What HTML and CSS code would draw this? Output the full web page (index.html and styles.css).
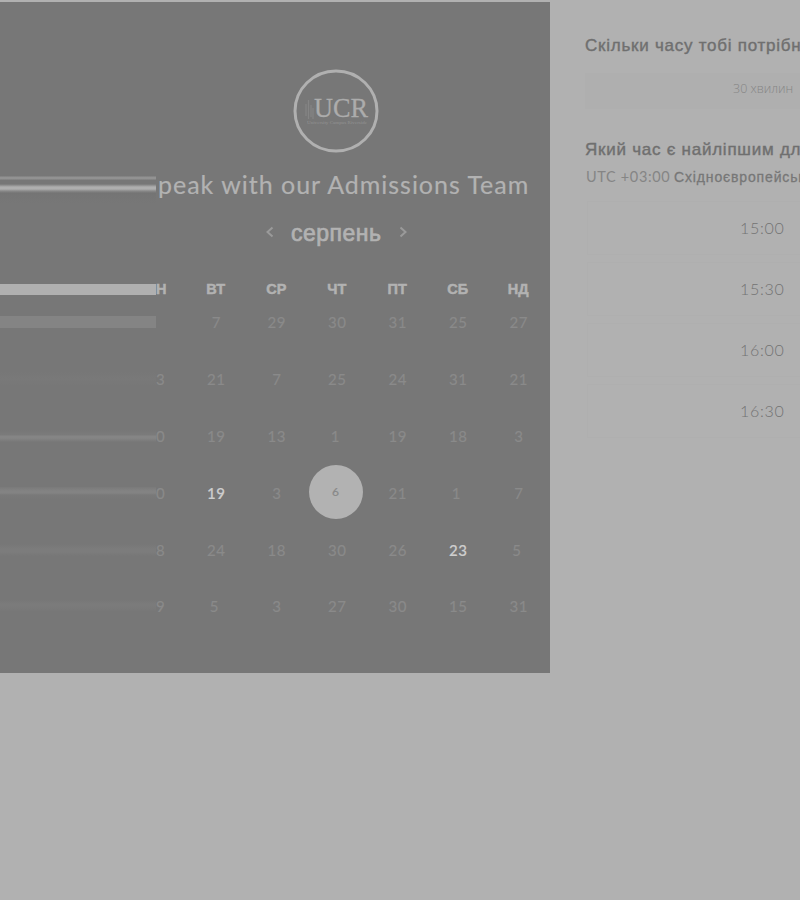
FILE: index.html
```html
<!DOCTYPE html>
<html lang="uk">
<head>
<meta charset="utf-8">
<title>Speak with our Admissions Team</title>
<link rel="stylesheet" href="styles.css">
</head>
<body>
<main class="scheduler">
  <section class="calendar">
    <div class="logo">
      <svg width="86" height="84" viewBox="0 0 86 84">
        <ellipse cx="43" cy="42" rx="41" ry="40" fill="none" stroke="#b0b0b0" stroke-width="3"/>
        <path d="M13 47V35M15.500 50V31M18 48V36M20 50V39" stroke="#858585" stroke-width="1.200"/>
        <text class="logo-name" x="21" y="48" textLength="54" lengthAdjust="spacingAndGlyphs">UCR</text>
        <text class="logo-sub" x="14" y="55" textLength="60" lengthAdjust="spacingAndGlyphs">University Campus Riverside</text>
      </svg>
    </div>
    <div class="heading">
      <div class="streak streak-title"></div>
      <h1>peak with our Admissions Team</h1>
    </div>
    <div class="month">
      <svg width="8" height="12" viewBox="0 0 8 12"><path d="M6.500 1.500L1.500 6l5 4.500"/></svg>
      <span>серпень</span>
      <svg width="8" height="12" viewBox="0 0 8 12"><path d="M1.500 1.500L6.500 6l-5 4.500"/></svg>
    </div>
    <div class="row weekdays"><i class="streak streak-days"></i><b class="cut">Н</b><b>ВТ</b><b>СР</b><b>ЧТ</b><b>ПТ</b><b>СБ</b><b>НД</b></div>
    <div class="row first"><i class="streak streak-one"></i><span class="cut"></span><span>7</span><span>29</span><span>30</span><span>31</span><span>25</span><span>27</span></div>
    <div class="row"><i class="streak streak-two"></i><span class="cut">3</span><span>21</span><span>7</span><span>25</span><span>24</span><span>31</span><span>21</span></div>
    <div class="row"><i class="streak streak-three"></i><span class="cut">0</span><span>19</span><span>13</span><span class="left">1</span><span>19</span><span>18</span><span>3</span></div>
    <div class="row"><i class="streak streak-four"></i><span class="cut">0</span><span class="open">19</span><span>3</span><span><em>6</em></span><span>21</span><span class="left">1</span><span>7</span></div>
    <div class="row"><i class="streak streak-five"></i><span class="cut">8</span><span>24</span><span>18</span><span>30</span><span>26</span><span class="open">23</span><span class="left">5</span></div>
    <div class="row"><i class="streak streak-six"></i><span class="cut">9</span><span class="left">5</span><span>3</span><span>27</span><span>30</span><span>15</span><span>31</span></div>
  </section>
  <section class="times">
    <h2 class="q-one">Скільки часу тобі потрібно?</h2>
    <div class="duration">30 хвилин</div>
    <h2 class="q-two">Який час є найліпшим для тебе?</h2>
    <p class="zone"><span>UTC +03:00</span> <b>Східноєвропейський час</b></p>
    <div class="slots">
      <div class="slot">15:00</div>
      <div class="slot">15:30</div>
      <div class="slot">16:00</div>
      <div class="slot">16:30</div>
    </div>
  </section>
</main>
</body>
</html>
```
FILE: styles.css
```css
* { box-sizing: border-box; }
body { margin: 0; width: 800px; height: 900px; overflow: hidden; background: #b1b1b1; font-family: Lato, "Liberation Sans", sans-serif; }
.scheduler { display: flex; width: 800px; overflow: hidden; padding-top: 2px; }
.calendar { flex: none; width: 550px; height: 671px; padding-top: 67px; background: #777; color: #b2b2b2; }
.logo { height: 84px; padding-left: 293px; }
.logo svg { display: block; }
.logo-name { font: 28px "Liberation Serif", serif; fill: #acacac; stroke: #acacac; stroke-width: .3px; }
.logo-sub { font: 4px "Liberation Serif", serif; fill: #939393; }
.heading { display: flex; height: 64px; padding-top: 16px; }
h1 { margin: -2px 0 0 2px; width: 375px; font-size: 25px; line-height: 34px; font-weight: 400; letter-spacing: .98px; white-space: nowrap; -webkit-text-stroke: .2px; }
.streak { display: block; flex: none; width: 156px; }
.streak-title { height: 36px; background: linear-gradient(#777 0 7px, #929292 8px 10px, #777 11px 15px, #898989 16px, #afafaf 18px 20px, #898989 22px, #747474 24px, #777 34px); }
.month { display: flex; height: 32px; padding-left: 266px; align-items: center; gap: 17px; font: 23px/32px "Liberation Sans", sans-serif; -webkit-text-stroke: .7px; }
.month span { width: 91px; letter-spacing: .5px; }
.month svg { position: relative; top: -1px; fill: none; stroke: #9a9a9a; stroke-width: 2; }
.row { display: grid; grid-template-columns: 156px 29.5px repeat(6, 60.5px); height: 56.8px; align-items: center; text-align: center; font-size: 15px; color: #8a8a8a; letter-spacing: .5px; -webkit-text-stroke: .2px; }
.row > span:not(.cut):not(.left) { padding-left: 1px; }
.row > .cut { text-align: left; overflow: hidden; }
.weekdays { margin-top: 22px; height: 36px; font: 700 14.500px "Liberation Sans", sans-serif; color: #b2b2b2; letter-spacing: 0; }
.weekdays b { -webkit-text-stroke: .5px; }
.first { margin-top: -13px; }
.left { padding-right: 3px; }
.open { color: #cecece; font-weight: 500; }
em { display: inline-flex; width: 54px; height: 54px; margin: -2px 3px 0 0; border-radius: 50%; background: #b2b2b2; color: #888; font-style: normal; font-size: 12px; align-items: center; justify-content: center; vertical-align: middle; }
.streak-days { height: 11px; background: #b0b0b0; }
.streak-one { height: 12px; background: #848484; }
.streak-two { height: 14px; background: linear-gradient(#777, #797979, #777); }
.streak-three { height: 12px; background: linear-gradient(#777, #7b7b7b 5px, #858585 6px 8px, #777); }
.streak-four { height: 12px; background: linear-gradient(#7a7a7a, #838383 4px 6px, #797979 8px, #777); }
.streak-five { height: 12px; background: linear-gradient(#777, #7c7c7c 5px 8px, #777); }
.streak-six { height: 12px; background: linear-gradient(#777, #7b7b7b 4px 6px, #777); }
.times { flex: none; width: 350px; padding: 32px 0 0 35px; color: #6f6f6f; }
h2 { margin: 0; font: 17px/24px "Liberation Sans", sans-serif; letter-spacing: .75px; white-space: nowrap; -webkit-text-stroke: .4px; }
.duration { height: 36px; margin-top: 15px; padding-left: 148px; background: #afafaf; font: 300 12.500px/32px "Open Sans", sans-serif; color: #858585; white-space: nowrap; }
.q-two { margin-top: 29px; letter-spacing: .75px; }
.zone { margin: 4px 0 0 1px; font-size: 14.500px; line-height: 22px; color: #858585; white-space: nowrap; }
.zone span { letter-spacing: .65px; }
.zone b { font: 14px "Liberation Sans", sans-serif; color: #777; letter-spacing: .85px; -webkit-text-stroke: .3px; }
.slots { display: grid; gap: 7px; margin: 13px 0 0 2px; }
.slot { height: 54px; padding-left: 152px; border: 1px solid #afafaf; font-size: 16px; font-weight: 300; line-height: 52px; color: #737373; letter-spacing: .7px; }
```
